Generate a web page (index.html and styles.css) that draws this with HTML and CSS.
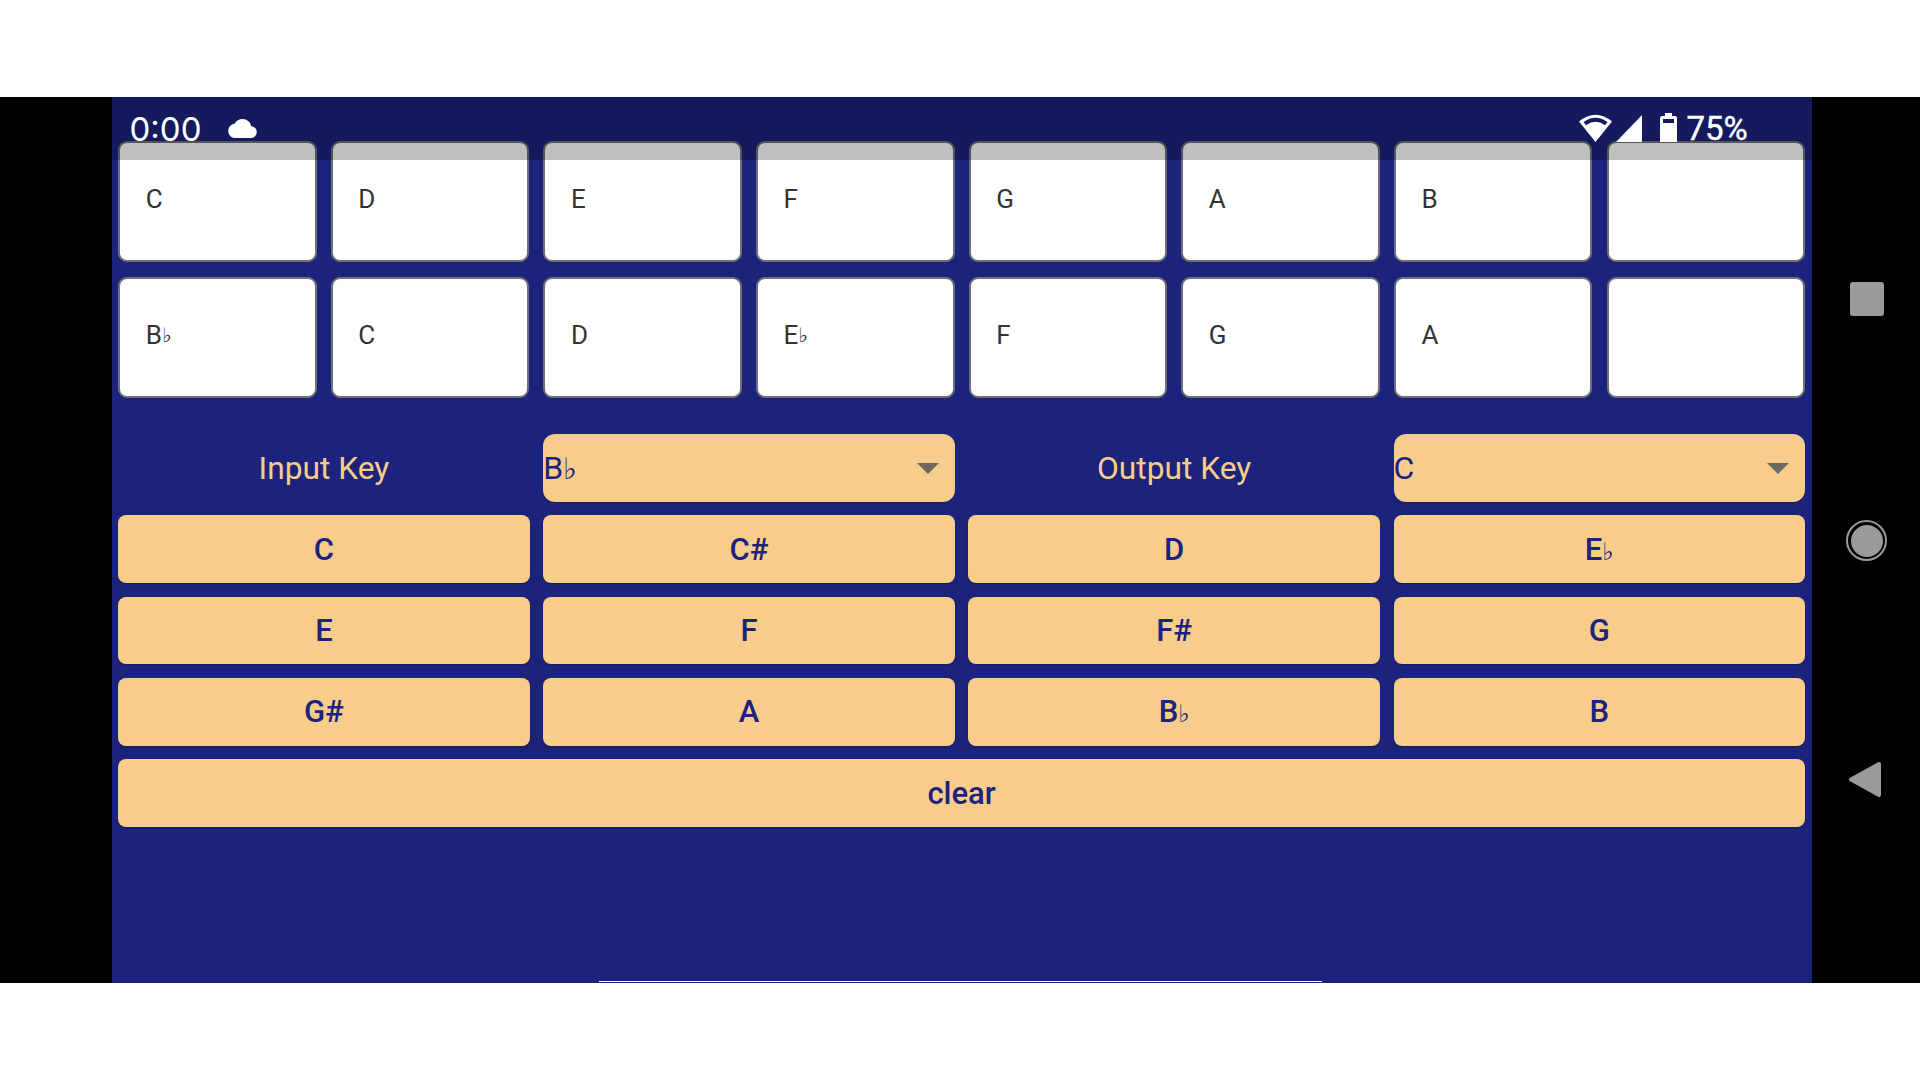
FILE: index.html
```html
<!DOCTYPE html>
<html lang="en">
<head>
<meta charset="utf-8">
<title>Transposer</title>
<link rel="stylesheet" href="styles.css">
</head>
<body>
<div class="device">
  <div class="edge-left"></div>
  <main class="app">
    <div class="status">
      <div class="status-left">
        <span class="clock">0:00</span>
        <svg class="cloud" viewBox="0 4 24 16"><path d="M19.35 10.04C18.67 6.59 15.64 4 12 4 9.11 4 6.6 5.64 5.35 8.04 2.34 8.36 0 10.91 0 14c0 3.31 2.69 6 6 6h13c2.76 0 5-2.24 5-5 0-2.64-2.05-4.78-4.65-4.96z"/></svg>
      </div>
      <div class="status-right">
        <svg class="wifi" viewBox="0 0 33 28"><path class="ico" d="M0 7.5Q16.5 -6 33 7.5L16.5 28Z"/><path class="gap" d="M4.5 8Q16.5 -0.5 28.5 8L26 11.2Q16.5 4.5 7 11.2Z"/></svg>
        <svg class="signal" viewBox="0 0 26 27"><path class="ico" d="M26 0V27H0Z"/></svg>
        <svg class="battery" viewBox="0 0 17 29"><path class="ico" d="M5 0H12V3H15Q17 3 17 5V29H0V5Q0 3 2 3H5Z"/><rect class="gap" x="3" y="6" width="11" height="4"/></svg>
        <span class="percent">75%</span>
      </div>
    </div>

    <section class="notes">
      <div class="note">C</div><div class="note">D</div><div class="note">E</div><div class="note">F</div>
      <div class="note">G</div><div class="note">A</div><div class="note">B</div><div class="note"></div>
      <div class="note">B<span class="flat">&#9837;</span></div><div class="note">C</div><div class="note">D</div><div class="note">E<span class="flat">&#9837;</span></div>
      <div class="note">F</div><div class="note">G</div><div class="note">A</div><div class="note"></div>
    </section>

    <section class="keys">
      <div class="key-label">Input Key</div>
      <div class="select"><span>B<span class="flat">&#9837;</span></span><i class="arrow"></i></div>
      <div class="key-label">Output Key</div>
      <div class="select"><span>C</span><i class="arrow"></i></div>

      <button class="btn">C</button><button class="btn">C#</button><button class="btn">D</button><button class="btn">E<span class="flat">&#9837;</span></button>
      <button class="btn">E</button><button class="btn">F</button><button class="btn">F#</button><button class="btn">G</button>
      <button class="btn">G#</button><button class="btn">A</button><button class="btn">B<span class="flat">&#9837;</span></button><button class="btn">B</button>
      <button class="btn btn-wide">clear</button>
    </section>
    <div class="home-line"></div>
  </main>
  <aside class="nav">
    <span class="nav-square"></span>
    <span class="nav-circle"></span>
    <svg class="nav-back" viewBox="0 0 32 35"><path d="M30 2L2 17.5L30 33Z"/></svg>
  </aside>
</div>
</body>
</html>
```

FILE: styles.css
```css
* { box-sizing: border-box; }
html, body { margin: 0; height: 1080px; background: #fff; overflow: hidden; }
body { padding-top: 97px; font-family: Roboto, "Liberation Sans", sans-serif; }

.device { display: flex; height: 886px; background: #000; }
.edge-left { flex: 0 0 111.5px; }
.nav {
  flex: 0 0 108.3px;
  display: flex;
  flex-direction: column;
  align-items: center;
  padding: 185px 0 0 1.5px;
}

.app {
  position: relative;
  flex: 1 1 auto;
  background: #1b237c;
  padding: 43.7px 6.7px 0;
}

.status {
  position: absolute;
  top: 0; left: 0; right: 0;
  height: 63px;
  background: rgba(0, 0, 0, .25);
  display: flex;
  justify-content: space-between;
  color: #fff;
  font-size: 33px;
  line-height: 38px;
  padding: 13px 64px 0 18px;
}
.status-left, .status-right { display: flex; align-items: flex-start; }
.clock { width: 97px; font-family: Inter, Roboto, sans-serif; font-size: 33px; }
.cloud { width: 31px; height: 19px; margin-top: 9px; fill: #fff; }
.wifi { width: 33px; height: 28px; margin: 4px 4px 0 0; }
.signal { width: 26px; height: 27px; margin: 5px 18px 0 0; }
.battery { width: 17px; height: 29px; margin: 3px 9px 0 0; }
.percent { -webkit-text-stroke: .4px #fff; }
.ico { fill: #fff; }
.gap { fill: #15195e; }

.notes {
  display: grid;
  grid-template-columns: repeat(8, 1fr);
  grid-auto-rows: 121.3px;
  gap: 15px 14.2px;
}
.note {
  display: flex;
  align-items: center;
  padding: 0 25.5px 5px;
  background: #fff;
  border: 2.5px solid #6f7075;
  border-radius: 9px;
  color: #333;
  font-size: 26px;
}
.flat { font-family: "DejaVu Sans", sans-serif; font-weight: 400; font-size: .78em; }

.keys {
  display: grid;
  grid-template-columns: repeat(4, 1fr);
  grid-auto-rows: 67.6px;
  gap: 13.7px;
  margin-top: 35.8px;
}
.key-label {
  display: flex;
  align-items: center;
  justify-content: center;
  padding-top: 1px;
  color: #f8cd8c;
  font-size: 31.7px;
}
.select {
  display: flex;
  align-items: center;
  justify-content: space-between;
  padding: 0 16px 0 0;
  background: #f8cd8c;
  border-radius: 12px;
  color: #1b237c;
  font-size: 32px;
  box-shadow: 0 1px 1px rgba(0, 0, 0, .3);
}
.select .flat { font-size: .92em; }
.arrow {
  width: 0; height: 0;
  margin-top: 2px;
  border-left: 11px solid transparent;
  border-right: 11px solid transparent;
  border-top: 11.5px solid #6a6a62;
}
.btn {
  padding: 0;
  border: 0;
  background: #f8cd8c;
  border-radius: 8px;
  color: #1b237c;
  font: 500 31px Roboto, "Liberation Sans", sans-serif;
  box-shadow: 0 1px 2px rgba(0, 0, 0, .3);
}
.btn-wide { grid-column: 1 / -1; }

.home-line {
  position: absolute;
  left: 487.5px;
  bottom: 1px;
  width: 723px;
  height: 1.5px;
  background: #fff;
}

.nav-square {
  width: 34px; height: 34px;
  background: #9a999b;
  border-radius: 3px;
}
.nav-circle {
  width: 41px; height: 41px;
  margin-top: 204px;
  background: #9a999b;
  background-clip: content-box;
  border: 2px solid #9a999b;
  padding: 2.5px;
  border-radius: 50%;
}
.nav-back { width: 32px; height: 35px; margin: 201px 3px 0 0; fill: #9a999b; stroke: #9a999b; stroke-width: 4; stroke-linejoin: round; }
```
